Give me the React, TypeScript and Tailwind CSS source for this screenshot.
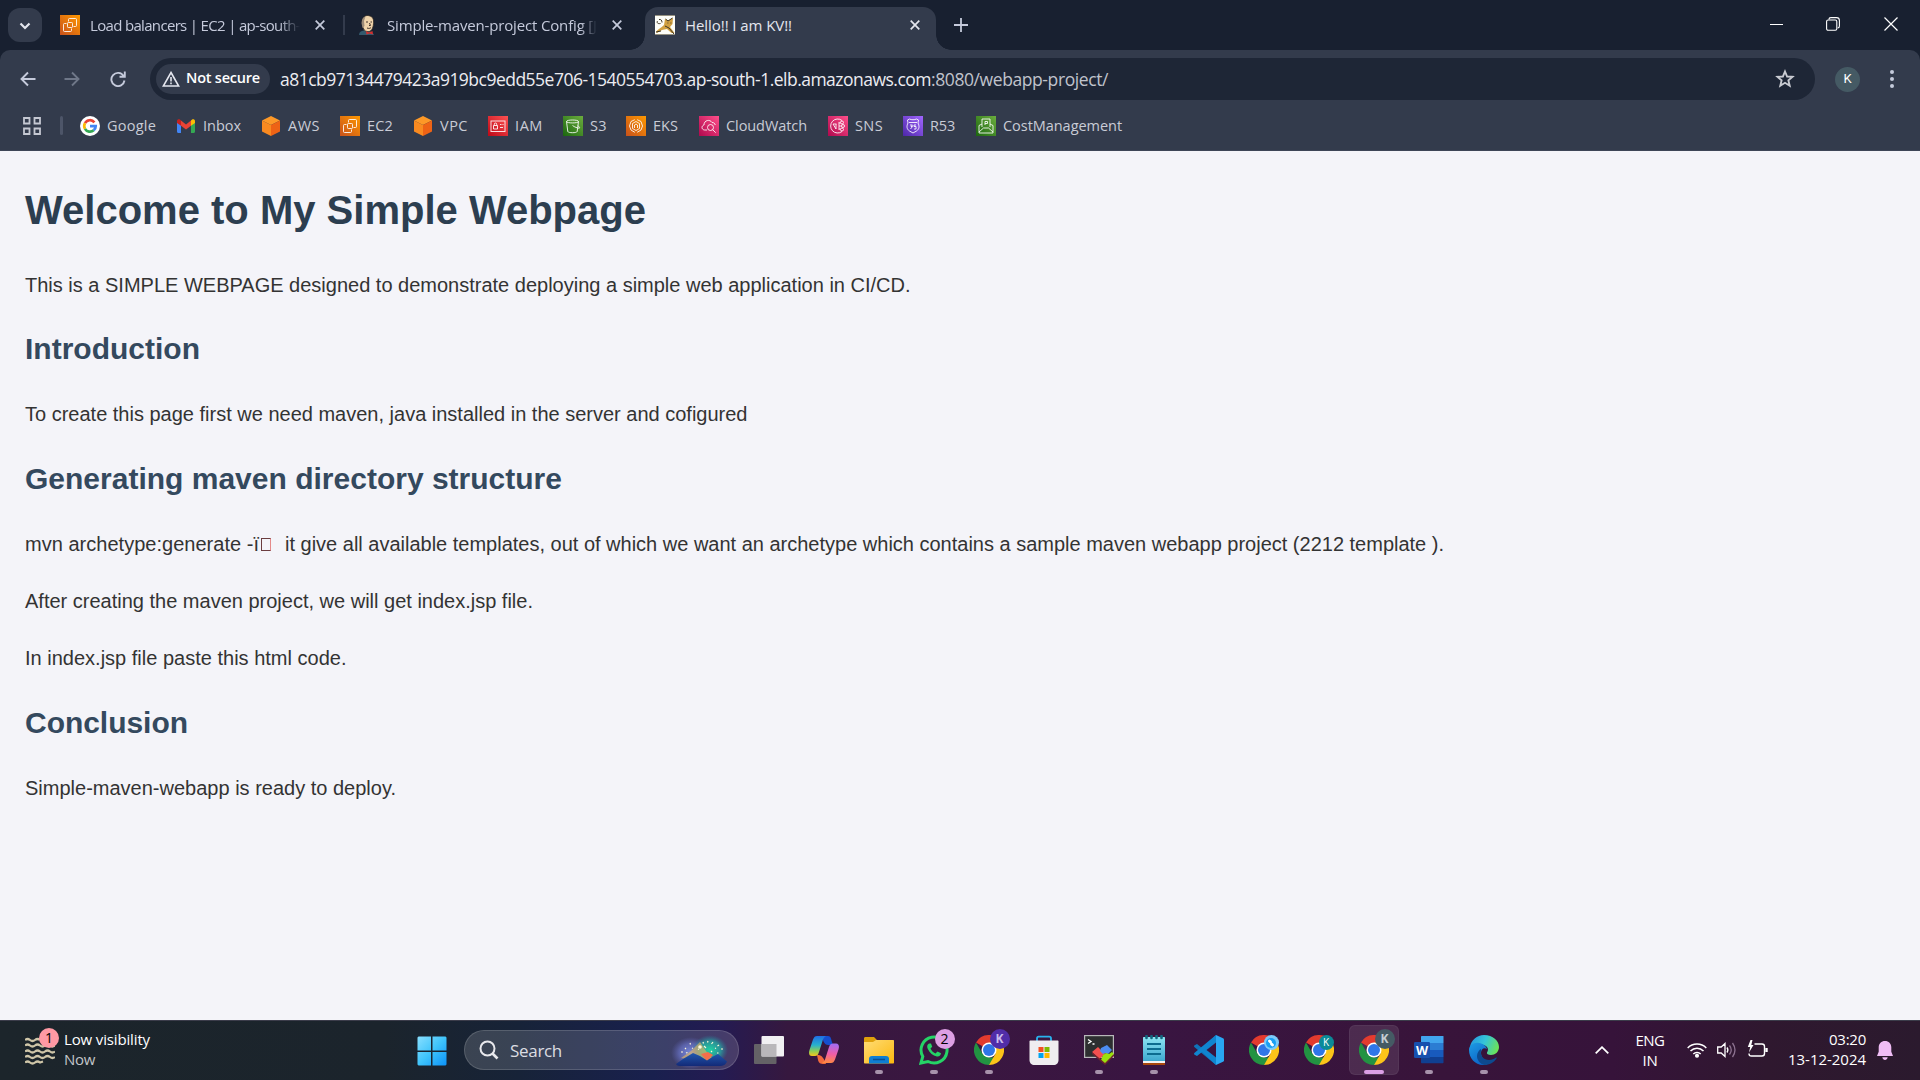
import React from "react";

type P = { className?: string };

const ui = "font-['Open_Sans','Noto_Sans',sans-serif]";

/* ---------- line drawings used inside the AWS service tiles ---------- */
const glyphs: Record<string, React.ReactNode> = {
  ec2: (
    <>
      <path d="M8.500 6.500V4.500q0-1 1-1h6q1 0 1 1v6q0 1-1 1h-2" />
      <rect x="7.500" y="7.500" width="5" height="5" rx=".8" />
      <path d="M6.500 8.500h-2q-1 0-1 1v6q0 1 1 1h6q1 0 1-1v-2" />
    </>
  ),
  iam: (
    <>
      <rect x="3" y="5" width="14" height="10.500" />
      <path d="M5.500 9.500h4v3.500h-4zM6.300 9.500V8.200a1.200 1.200 0 0 1 2.400 0v1.300M12 8.500h1.500M14.500 8.500h1M12 11.500h3" />
    </>
  ),
  s3: (
    <path d="M3.500 5.500c0-2 12-2 12 0l-1.300 10c-.4 1.600-9 1.600-9.400 0L3.500 5.500c0 1.900 12 1.900 12 0M9.500 9.500c2 1.500 5 2.700 6.800 2.700 1-.3-.5-2-1.600-2.600" />
  ),
  eks: (
    <>
      <path d="M8.800 3.700L5 5.500 3.500 10 5 14l3.800 2.300M11.200 3.700L15 5.500l1.500 4.500-1.500 4-3.800 2.300" />
      <path d="M10 5.500l3.500 2v5L10 14.500l-3.500-2v-5z" />
      <path d="M8.500 12V9q1.500-2 3 0v3" />
    </>
  ),
  cw: (
    <>
      <path d="M8 14H5.500C2 13.500 2.500 9.500 5 9c0-5 6-6 8-2.500 2 0 3 1 3.200 2.500" />
      <circle cx="11.500" cy="11.500" r="3" />
      <path d="M13.700 13.700l3 3" />
    </>
  ),
  sns: (
    <>
      <path d="M14 4.500A7 7 0 1 0 14 15.500M5 8h3.500M5 8l3 5V8" />
      <circle cx="14" cy="6.500" r="1.500" />
      <circle cx="15" cy="10" r="1.500" />
      <circle cx="14" cy="13.500" r="1.500" />
      <path d="M11 6v8M11 10h2.500M11 7h1.500M11 13h1.500" />
    </>
  ),
  r53: (
    <>
      <path d="M4.500 4l2-1c2 1 5 1 7 0l2 1-.5 3c1.500 3 1.500 6-1.500 8L10 17l-3.500-2c-3-2-3-5-1.500-8z" />
      <path d="M6 6.500h8M7 9h2.500L8 10.500h1.500L7.500 13M13 9h-2v1.500h2V13h-2" />
    </>
  ),
  cost: (
    <>
      <path d="M3 9.500V17h14V9.500L14 8M3 9.500L6 8M3 16l4.500-4h5l4.500 4" />
      <path d="M6 11V3h8v8M9 9V5.500h2.500V7.500H9" />
    </>
  ),
};

const Tile = ({ g, from, to }: { g: string; from: string; to: string }) => (
  <svg viewBox="0 0 20 20" className="size-5 shrink-0">
    <defs>
      <linearGradient id={"tile-" + g} x1="0" y1="1" x2="1" y2="0">
        <stop offset="0" stopColor={from} />
        <stop offset="1" stopColor={to} />
      </linearGradient>
    </defs>
    <rect width="20" height="20" fill={`url(#tile-${g})`} />
    <g fill="none" stroke="#fff" strokeOpacity=".85" strokeWidth="1">
      {glyphs[g]}
    </g>
  </svg>
);

const Cube = () => (
  <svg viewBox="0 0 20 20" className="size-5 shrink-0">
    <path d="M10 0l9 4.500-9 4.500-9-4.500z" fill="#fd9827" />
    <path d="M1 4.500L10 9v11l-9-4.500z" fill="#f98a20" />
    <path d="M19 4.500L10 9v11l9-4.500z" fill="#ee6315" />
  </svg>
);

const Google = () => (
  <svg viewBox="0 0 20 20" className="size-5 shrink-0">
    <circle cx="10" cy="10" r="10" fill="#fff" />
    <g fill="none" strokeWidth="2.700">
      <path d="M14.400 6.300A5.700 5.700 0 0 0 5 7.200" stroke="#ea4335" />
      <path d="M5 7.200a5.700 5.700 0 0 0 0 5.600" stroke="#fbbc05" />
      <path d="M5 12.800a5.700 5.700 0 0 0 8.700 1.500" stroke="#34a853" />
      <path d="M13.700 14.300A5.700 5.700 0 0 0 15.700 10.100H10" stroke="#4285f4" />
    </g>
  </svg>
);

const Gmail = () => (
  <svg viewBox="0 0 20 20" className="size-5 shrink-0">
    <path d="M1 6v9.500c0 .8.600 1.500 1.400 1.500H5V9z" fill="#4285f4" />
    <path d="M19 6v9.500c0 .8-.6 1.500-1.400 1.500H15V9z" fill="#34a853" />
    <path d="M5 4.600l5 3.800 5-3.800v5.200l-5 3.800-5-3.800z" fill="#ea4335" />
    <path d="M1 5.300C1 3.300 3.100 2.900 4.200 3.800L5 4.500v5.300L1 6.900z" fill="#c5221f" />
    <path d="M19 5.300c0-2-2.100-2.400-3.200-1.500l-.8.700v5.300l4-2.900z" fill="#fbbc04" />
  </svg>
);

const Butler = () => (
  <svg viewBox="0 0 20 20" className="size-5 shrink-0">
    <path d="M1 20c0-3 2-4 5-4.500s9 .5 10 4.500z" fill="#33596d" />
    <path d="M4 5C5.500 1 8.500 0 11 .7c4 .9 5 4 4.500 8-.3 5-2.500 8-5.500 8-3.500 0-5-3-5.500-6z" fill="#eed3aa" stroke="#292320" strokeWidth=".8" />
    <path d="M3.500 8c.5-4 1.500-6 4-6.500L6 6l.5 5-2 2z" fill="#9c8b78" />
    <path d="M8 7h2M12.500 7H14M11.500 8l1 2.500H11M9 13c2 .7 3 .5 4-.5" stroke="#40312b" strokeWidth="1" fill="none" />
    <path d="M8 16l3 1.500 3.500-1.500.5 3.500-3.500-1-3 1z" fill="#d3302f" />
  </svg>
);

const Tomcat = () => (
  <svg viewBox="0 0 20 20" className="size-5 shrink-0">
    <rect width="20" height="20" fill="#fdfdf8" />
    <path d="M1 17c2-3 5-4 8-7l1-6 3 1.500L18 3l-.5 6-2.500 3 4.500 6h-3L12 14l-5 1-5 3z" fill="#d1a041" />
    <path d="M5.500 8.500C3 9 1.500 8 2.500 6M4 4.500c2-.5 3 1 3 3M1 17l5-1M10.500 4l2.500 2 4.500-3M12.500 8h.8M15.500 8h.8M10 11l4 2 5 6" fill="none" stroke="#3d3524" strokeWidth="1" />
    <path d="M0 .4h20M0 19.600h20" stroke="#6b6550" strokeWidth=".8" />
  </svg>
);

const Close = ({ className = "" }: P) => (
  <svg viewBox="0 0 10 10" className={"size-[10px] shrink-0 " + className} stroke="currentColor" strokeWidth="1.700">
    <path d="M.7.7l8.600 8.600M9.300.7L.7 9.300" />
  </svg>
);

/* A run of text held to a fixed advance width. */
const Fit = ({ w, size, weight, children }: { w: number; size: number; weight?: number; children: React.ReactNode }) => {
  const ref = React.useRef<HTMLSpanElement>(null);
  const [ls, setLs] = React.useState(0);
  React.useLayoutEffect(() => {
    const el = ref.current;
    if (!el) return;
    const n = (el.textContent || "").length;
    el.style.letterSpacing = "0px";
    const next = (w - el.getBoundingClientRect().width) / n;
    el.style.letterSpacing = next + "px";
    setLs(next);
  }, [w]);
  return (
    <span ref={ref} className="inline-block align-top whitespace-nowrap" style={{ letterSpacing: ls, fontSize: size, fontWeight: weight }}>
      {children}
    </span>
  );
};

/* ---------- browser chrome ---------- */
const TabStrip = () => (
  <div className="flex h-[50px] bg-[#182030] text-[15px] text-[#c5cadb]">
    <div className="mt-2 ml-2 flex h-[34px] w-[34px] shrink-0 items-center justify-center rounded-xl bg-[#333b4c]">
      <svg viewBox="0 0 12 8" className="mt-px h-2 w-3" fill="none" stroke="#e4e6ee" strokeWidth="2.200">
        <path d="M1.500 1.500L6 6l4.500-4.500" />
      </svg>
    </div>
    <div className="mt-2 ml-[18px] flex h-[34px] w-[266px] items-center">
      <Tile g="ec2" from="#c8511b" to="#ff9900" />
      <div className="ml-[10px] w-[210px] whitespace-nowrap [mask-image:linear-gradient(to_right,#000_90%,transparent)]">
        <Fit w={210} size={15}>Load balancers | EC2 | ap-south-</Fit>
      </div>
      <Close className="ml-[15px]" />
    </div>
    <div className="mt-[15px] ml-[17px] h-5 w-0.5 bg-[#333b4c]" />
    <div className="mt-2 ml-[13px] flex h-[34px] w-[267px] items-center">
      <Butler />
      <div className="ml-[9px] w-[210px] whitespace-nowrap [mask-image:linear-gradient(to_right,#000_92%,transparent)]">
        <Fit w={210} size={15}>Simple-maven-project Config [J</Fit>
      </div>
      <Close className="ml-[15px]" />
    </div>
    <div className="relative mt-[7px] ml-[20px] flex h-[43px] w-[291px] items-center rounded-t-[13px] bg-[#333b4c] pb-[7px]">
      <div className="absolute bottom-0 -left-[15px] size-[15px] bg-[radial-gradient(circle_at_0_0,#182030_14.500px,#333b4c_15px)]" />
      <div className="absolute -right-[15px] bottom-0 size-[15px] bg-[radial-gradient(circle_at_100%_0,#182030_14.500px,#333b4c_15px)]" />
      <div className="ml-[10px]">
        <Tomcat />
      </div>
      <div className="ml-[10px] w-[225px] text-[#e4e6ee]">
        <Fit w={107} size={15}>Hello!! I am KV!!</Fit>
      </div>
      <Close className="text-[#e4e6ee]" />
    </div>
    <svg viewBox="0 0 14 14" className="mt-[18px] ml-[18px] size-[14px]" stroke="#c5cadb" strokeWidth="1.800">
      <path d="M7 0v14M0 7h14" />
    </svg>
    <div className="mt-[16px] mr-[22px] ml-auto flex h-4 items-center">
      <div className="h-px w-[13px] bg-white" />
      <svg viewBox="0 0 14 14" className="ml-[43px] size-[14px]" fill="none" stroke="#fff" strokeWidth="1.100">
        <rect x=".6" y="3" width="10.200" height="10.200" rx="1.500" />
        <path d="M3 2.500C3 1 4 .6 5 .6h5.500c1.800 0 2.900 1 2.900 2.900V9c0 1-.5 2-1.800 2" />
      </svg>
      <svg viewBox="0 0 14 14" className="ml-[44px] size-[14px]" stroke="#fff" strokeWidth="1.200">
        <path d="M.5.500l13 13M13.500.500l-13 13" />
      </svg>
    </div>
  </div>
);

const Toolbar = () => (
  <div className="flex h-[58px] items-center bg-[#333b4c]">
    <svg viewBox="0 0 16 16" className="ml-5 size-4" fill="none" stroke="#c5cadb" strokeWidth="1.900">
      <path d="M15.500 8H1.500M8 1.500L1.500 8 8 14.500" />
    </svg>
    <svg viewBox="0 0 16 16" className="ml-7 size-4" fill="none" stroke="#6f7788" strokeWidth="1.900">
      <path d="M.5 8h14M8 1.500L14.500 8 8 14.500" />
    </svg>
    <svg viewBox="0 0 16 16" className="ml-[30px] size-4" fill="none" stroke="#c5cadb" strokeWidth="1.900">
      <path d="M13.600 5A6.600 6.600 0 1 0 14.500 9.500M14.800.5v5.300H9.500" />
    </svg>
    <div className="ml-[24px] flex h-[42px] w-[1665px] items-center rounded-full bg-[#1e2636] pl-[6px]">
      <div className="flex h-[30px] w-[114px] items-center rounded-full bg-[#333b4c] pl-[6px] text-white">
        <svg viewBox="0 0 18 16" className="h-4 w-[18px]" fill="none" stroke="#e4e6ee" strokeWidth="1.600">
          <path d="M9 1.500L16.700 15H1.300zM9 6v4.500M9 11.500v1.800" />
        </svg>
        <span className="ml-1.5 leading-none">
          <Fit w={74} size={14.500} weight={600}>Not secure</Fit>
        </span>
      </div>
      <div className="ml-[10px] flex text-[#ececf1]">
        <Fit w={651} size={17.500}>a81cb97134479423a919bc9edd55e706-1540554703.ap-south-1.elb.amazonaws.com</Fit>
        <span className="text-[#c0c3cc]">
          <Fit w={177} size={17.500}>:8080/webapp-project/</Fit>
        </span>
      </div>
      <svg viewBox="0 0 20 20" className="mr-5 ml-auto size-5" fill="none" stroke="#c9cbd2" strokeWidth="1.900">
        <path d="M10 2.500l2.100 5 5.400.4-4.100 3.500 1.300 5.300-4.700-2.900-4.700 2.900 1.300-5.300L2.500 7.900l5.400-.4z" />
      </svg>
    </div>
    <div className="ml-5 flex size-[25px] items-center justify-center rounded-full bg-[#455a64] font-['Roboto',sans-serif] text-[13px] text-white">K</div>
    <div className="ml-[30px] flex w-1 flex-col gap-[3px]">
      <i className="size-1 rounded-full bg-[#c5cadb]" />
      <i className="size-1 rounded-full bg-[#c5cadb]" />
      <i className="size-1 rounded-full bg-[#c5cadb]" />
    </div>
  </div>
);

const orange = ["#c8511b", "#ff9900"];
const pink = ["#b0084d", "#ff4f8b"];
const bookmarks: { t: string; w: number; cell: number; icon: React.ReactNode }[] = [
  { t: "Google", w: 49, cell: 96, icon: <Google /> },
  { t: "Inbox", w: 38, cell: 85, icon: <Gmail /> },
  { t: "AWS", w: 32, cell: 79, icon: <Cube /> },
  { t: "EC2", w: 26, cell: 73, icon: <Tile g="ec2" from={orange[0]} to={orange[1]} /> },
  { t: "VPC", w: 28, cell: 75, icon: <Cube /> },
  { t: "IAM", w: 28, cell: 75, icon: <Tile g="iam" from="#bd0816" to="#ff5252" /> },
  { t: "S3", w: 17, cell: 63, icon: <Tile g="s3" from="#1b660f" to="#6cae3e" /> },
  { t: "EKS", w: 25, cell: 73, icon: <Tile g="eks" from={orange[0]} to={orange[1]} /> },
  { t: "CloudWatch", w: 81, cell: 129, icon: <Tile g="cw" from={pink[0]} to={pink[1]} /> },
  { t: "SNS", w: 28, cell: 75, icon: <Tile g="sns" from={pink[0]} to={pink[1]} /> },
  { t: "R53", w: 25, cell: 73, icon: <Tile g="r53" from="#4d27a8" to="#a166ff" /> },
  { t: "CostManagement", w: 119, cell: 170, icon: <Tile g="cost" from="#1b660f" to="#6cae3e" /> },
];

const Bookmarks = () => (
  <div className="flex h-[43px] border-b border-[#3d4557] bg-[#333b4c] text-[#c9ccd6]">
    <svg viewBox="0 0 18 18" className="mt-[9px] ml-[23px] size-[18px]" fill="none" stroke="#c5c8d2" strokeWidth="1.800">
      <path d="M1 1h5.500v5.500H1zM11.500 1H17v5.500h-5.500zM1 11.500h5.500V17H1zM11.500 11.500H17V17h-5.500z" />
    </svg>
    <div className="mt-2 ml-[19px] h-[19px] w-[3px] rounded bg-[#4d5568]" />
    <div className="ml-[17px] flex h-9 items-center">
      {bookmarks.map((b) => (
        <div key={b.t} className="flex items-center gap-[7px]" style={{ width: b.cell }}>
          {b.icon}
          <Fit w={b.w} size={14.500}>{b.t}</Fit>
        </div>
      ))}
    </div>
  </div>
);

/* ---------- web page ---------- */
const H2 = ({ w, children }: { w: number; children: React.ReactNode }) => (
  <h2 className="mb-[25px] h-12 leading-[48px] text-[#34495e]">
    <Fit w={w} size={30} weight={700}>{children}</Fit>
  </h2>
);
const Para = ({ w, children }: { w: number; children: React.ReactNode }) => (
  <p className="mb-[25px] h-8 leading-8 text-[#333]">
    <Fit w={w} size={20}>{children}</Fit>
  </p>
);

const Page = () => (
  <main className="h-[869px] bg-[#f4f4f9] px-[25px] pt-[27px] font-['Liberation_Sans',Arial,sans-serif]">
    <h1 className="mb-[27px] h-16 leading-[64px] text-[#2c3e50]">
      <Fit w={621} size={40} weight={700}>Welcome to My Simple Webpage</Fit>
    </h1>
    <Para w={885.5}>This is a SIMPLE WEBPAGE designed to demonstrate deploying a simple web application in CI/CD.</Para>
    <div className="-mt-px">
      <H2 w={175}>Introduction</H2>
      <Para w={722.5}>To create this page first we need maven, java installed in the server and cofigured</Para>
      <H2 w={537}>Generating maven directory structure</H2>
      <p className="mb-[25px] flex h-8 items-center leading-8 text-[#333]">
        <Fit w={234} size={20}>mvn archetype:generate -ï</Fit>
        <i className="mt-px ml-[2px] h-[13px] w-[10px] border border-[#6b3d40] border-r-[#e58a8a]" />
        <span className="ml-[14px]">
          <Fit w={1159} size={20}>it give all available templates, out of which we want an archetype which contains a sample maven webapp project (2212 template ).</Fit>
        </span>
      </p>
      <Para w={508}>After creating the maven project, we will get index.jsp file.</Para>
      <Para w={321.5}>In index.jsp file paste this html code.</Para>
      <H2 w={163}>Conclusion</H2>
      <Para w={371}>Simple-maven-webapp is ready to deploy.</Para>
    </div>
  </main>
);

/* ---------- taskbar icons ---------- */
const Windows = () => (
  <svg viewBox="0 0 30 30" className="size-[30px]">
    <defs>
      <linearGradient id="win" x1="0" y1="0" x2="30" y2="30" gradientUnits="userSpaceOnUse">
        <stop offset="0" stopColor="#8be0ff" />
        <stop offset=".5" stopColor="#3fc4fb" />
        <stop offset="1" stopColor="#0a90f8" />
      </linearGradient>
    </defs>
    <path d="M1.500.5H14v14H.5v-13zM15.500.5h13l1 1v13h-14zM.5 16H14v13.500H1.500l-1-1zM15.500 16h14v12.500l-1 1h-13z" fill="url(#win)" />
  </svg>
);

const TaskView = () => (
  <svg viewBox="0 0 30 30" className="size-[30px]">
    <rect y="9" width="22.500" height="20" rx="1" fill="#646266" />
    <rect x="7.500" y="1" width="22.500" height="20.500" rx="1" fill="#f1f0f2" />
    <path d="M7.500 9h15v12.500h-15z" fill="#b9b7ba" />
  </svg>
);

const Copilot = () => (
  <svg viewBox="0 0 30 30" className="size-[30px]">
    <defs>
      <linearGradient id="cpa" x1="0" y1="0" x2="0" y2="1">
        <stop offset="0" stopColor="#1f6fe5" />
        <stop offset=".45" stopColor="#27b1cf" />
        <stop offset=".75" stopColor="#8ccf57" />
        <stop offset="1" stopColor="#f6c61c" />
      </linearGradient>
      <linearGradient id="cpb" x1=".3" y1="0" x2=".2" y2="1">
        <stop offset="0" stopColor="#a66cf0" />
        <stop offset=".5" stopColor="#ef5da8" />
        <stop offset="1" stopColor="#ff8b3d" />
      </linearGradient>
    </defs>
    <path d="M13 1h6c3 0 3 3 4 6l1 3h-5c-3 0-5-3-6-9z" fill="#154fd0" />
    <path d="M8 1h9c-2 1-3 3-3.500 5L10 17c-1 3-2 4-4 4H3c-3 0-3.500-3-2.500-6L4 4.500C5 2 6 1 8 1z" fill="url(#cpa)" />
    <path d="M17 29c-5 0-7 0-8-4l-1-5c4 0 6 1 9 9z" fill="#f16a3d" />
    <path d="M22 28h-9c2-1 3-3 3.500-5L20 12c1-3 2-3.500 4-3.500h3c3 0 3.500 3 2.500 6L26 24.500c-1 2.500-2 3.500-4 3.500z" fill="url(#cpb)" />
  </svg>
);

const Explorer = () => (
  <svg viewBox="0 0 30 30" className="size-[30px]">
    <defs>
      <linearGradient id="fold" x1="0" y1="0" x2="1" y2="1">
        <stop offset="0" stopColor="#ffdc75" />
        <stop offset="1" stopColor="#fcb80f" />
      </linearGradient>
    </defs>
    <path d="M0 3.500C0 2.600.5 2 1.500 2H10l3 3h15v4H0z" fill="#dfa00b" />
    <path d="M0 7h9l3-2h17c.6 0 1 .4 1 1v21.500c0 .6-.4 1-1 1H1c-.6 0-1-.4-1-1z" fill="url(#fold)" />
    <path d="M5 28.500V24c0-2 1-3 3-3h14c2 0 3 1 3 3v4.500z" fill="#0f7ed2" />
    <path d="M9 24.500h12" stroke="#0a4f93" strokeWidth="1.500" />
  </svg>
);

const WhatsApp = () => (
  <svg viewBox="0 0 30 30" className="size-[30px]" fill="none">
    <path d="M2 28l1.800-6.500A13 13 0 1 1 9 26.500z" stroke="#25d366" strokeWidth="3" />
    <path d="M10 8.500c-2 1-2.300 3-1.200 5.500 2 4 5 6.500 9 7.500 2.500.5 4-1 4.200-3.200L18.500 16.500l-2 2c-2.500-1-4-2.700-5-5l1.700-1.800L12 8.500z" fill="#25d366" />
  </svg>
);

const Chrome = () => (
  <svg viewBox="0 0 30 30" className="size-[30px]">
    <path d="M15 15L2 7.500A15 15 0 0 1 28 7.500z" fill="#e33b2e" />
    <path d="M2 7.500L8.500 18.800 15 22.500h6.500L15 30A15 15 0 0 1 2 7.500z" fill="#229342" />
    <path d="M21.500 18.700L15 30a15 15 0 0 0 13-22.500H15z" fill="#fcc419" />
    <circle cx="15" cy="15" r="7.500" fill="#fff" />
    <circle cx="15" cy="15" r="6" fill="#2f76e8" />
  </svg>
);

const Store = () => (
  <svg viewBox="0 0 30 30" className="size-[30px]">
    <path d="M8 7V3.500C8 2.300 8.600 1.700 9.800 1.700h10.400c1.200 0 1.800.6 1.800 1.800V7" fill="none" stroke="#29b2ee" strokeWidth="1.800" />
    <path d="M.5 6.500c0-.8.300-1 1-1h27c.7 0 1 .2 1 1V25c0 3-2 5-5 5h-19c-3 0-5-2-5-5z" fill="#efedf0" />
    <path d="M9.500 12h5v5h-5z" fill="#f25022" />
    <path d="M15.500 12h5v5h-5z" fill="#7fba00" />
    <path d="M9.500 18h5v5h-5z" fill="#00a4ef" />
    <path d="M15.500 18h5v5h-5z" fill="#ffb900" />
  </svg>
);

const Terminal = () => (
  <svg viewBox="0 0 30 30" className="size-[30px]">
    <rect x=".6" y=".6" width="28.800" height="21.800" fill="#2d2f30" stroke="#b8b8ba" strokeWidth="1.200" />
    <path d="M4 4.500l3 2-3 2M8.500 9h2" stroke="#fff" strokeWidth="1.300" fill="none" />
    <path d="M8 17l6-5 3 3 2-1 3 3-4 5-3 2z" fill="#f2504f" />
    <path d="M17 13l6-3 5 5-4 4-3-1-2 1-3-3z" fill="#4c8df0" />
    <path d="M19 20l3-2 3 1 3-2 2 2-9 10-4-4z" fill="#9be00c" />
    <path d="M8 17v2l13 11 9-9v-2l-9 9z" fill="#6b2430" />
  </svg>
);

const Notepad = () => (
  <svg viewBox="0 0 30 30" className="size-[30px]">
    <defs>
      <linearGradient id="note" x1="0" y1="0" x2="0" y2="1">
        <stop offset="0" stopColor="#8ce4f2" />
        <stop offset="1" stopColor="#3ea9cf" />
      </linearGradient>
    </defs>
    <path d="M4 25h22v4.500c0 .5-.3.500-.5.500h-21c-.3 0-.5-.2-.5-.5z" fill="#a8480d" />
    <path d="M4 24h22v4H4z" fill="#f3f3f3" />
    <path d="M4 3c0-.6.400-1 1-1h20c.6 0 1 .4 1 1v23H4z" fill="url(#note)" />
    <path d="M8 9h14M8 14h14M8 19h14" stroke="#0c6c8f" strokeWidth="1.900" />
    <path d="M7.500 1v2M12.500 1v2M17.500 1v2M22.500 1v2" stroke="#12677f" strokeWidth="2.600" strokeLinecap="round" />
  </svg>
);

const VSCode = () => (
  <svg viewBox="0 0 30 30" className="size-[30px]">
    <path d="M22 0L8 13 3 9 .6 10.300c-.8.600-.8 1.400 0 2L22 30z" fill="#0f73b8" />
    <path d="M22 30L8 17l-5 4-2.400-1.300c-.8-.6-.8-1.400 0-2L22 0z" fill="#1085cf" />
    <path d="M22 7.500L12.500 15l9.500 7.500z" fill="#391540" />
    <path d="M22 0l7 3.200c.6.300 1 .8 1 1.500v20.600c0 .7-.4 1.200-1 1.500L22 30z" fill="#29a7f2" />
  </svg>
);

const Word = () => (
  <svg viewBox="0 0 30 30" className="size-[30px]">
    <path d="M8 1h21c.6 0 .5.400.5 1v6H7V2c0-.6.400-1 1-1z" fill="#41a5ee" />
    <path d="M7 8h22.500v7H7z" fill="#2b7cd3" />
    <path d="M7 15h22.500v7H7z" fill="#185abd" />
    <path d="M7 22h22.500v5.500c0 .6-.4.800-1 .8H8c-.6 0-1-.4-1-1z" fill="#103f91" />
    <rect y="7" width="16" height="16" rx="1.300" fill="#1650ae" />
    <text x="8" y="19.500" textAnchor="middle" fontSize="12.500" fontWeight="700" fill="#fff">W</text>
  </svg>
);

const Edge = () => (
  <svg viewBox="0 0 30 30" className="size-[30px]">
    <defs>
      <linearGradient id="edg" x1="0" y1=".2" x2="1" y2=".5">
        <stop offset="0" stopColor="#2596e0" />
        <stop offset=".5" stopColor="#35c5d8" />
        <stop offset="1" stopColor="#6be25a" />
      </linearGradient>
      <linearGradient id="edb" x1="0" y1="0" x2=".6" y2="1">
        <stop offset="0" stopColor="#1d9ce4" />
        <stop offset="1" stopColor="#0c62c6" />
      </linearGradient>
    </defs>
    <path d="M1 12C2 5 8 0 15 0c9 0 15 6 15 12 0 5-4 8-8 8-3 0-4.500-1-4-2.500 3-4-1-8-6-8-5 0-9 1-11 4.500z" fill="url(#edg)" />
    <path d="M0 15c0-5 5-8 10-7 4 .5 7 3 8 6-3-2-6 0-6 4 0 5 4 8 8 9.500-2 2-4 2.500-6 2.500C6 30 0 23 0 15z" fill="url(#edb)" />
    <path d="M12 16c-1 5 3 9 8 9 3 0 5-1 7-2.500.5-.3 1 0 .6.700C25 27.500 20.500 30 15.500 30 11 29 8 25 8 21c0-3 2-6 4-7z" fill="#0d4a8f" />
  </svg>
);

type App = { id: string; icon: React.ReactNode; badge?: React.ReactNode; run?: boolean; active?: boolean };
const badge = "absolute flex items-center justify-center rounded-full font-['Open_Sans',sans-serif]";
const apps: App[] = [
  { id: "view", icon: <TaskView /> },
  { id: "copilot", icon: <Copilot /> },
  { id: "files", icon: <Explorer />, run: true },
  { id: "wa", icon: <WhatsApp />, run: true, badge: <b className={badge + " -top-[6px] left-4 size-5 bg-[#dd9fe3] text-sm font-normal text-black"}>2</b> },
  { id: "ch1", icon: <Chrome />, run: true, badge: <b className={badge + " -top-[6px] left-4 size-5 bg-[#512da8] text-xs text-[#c9bbec]"}>K</b> },
  { id: "store", icon: <Store /> },
  { id: "term", icon: <Terminal />, run: true },
  { id: "note", icon: <Notepad />, run: true },
  { id: "code", icon: <VSCode /> },
  {
    id: "ch2",
    icon: <Chrome />,
    badge: (
      <b className={badge + " top-0 left-[15px] size-[15px] bg-[#7ccbfa]"}>
        <svg viewBox="0 0 10 10" className="size-[10px]">
          <circle cx="5" cy="5" r="5" fill="#1aa0f4" />
          <path d="M3.500 3l1 1M5.500 6l1 1" stroke="#fff" strokeWidth="2.800" strokeLinecap="round" />
        </svg>
      </b>
    ),
  },
  { id: "ch3", icon: <Chrome />, badge: <b className={badge + " top-0 left-[15px] size-[15px] bg-[#0b8a98] text-[10px] font-normal text-white"}>K</b> },
  { id: "ch4", icon: <Chrome />, active: true, badge: <b className={badge + " -top-[6px] left-4 size-5 bg-[#455a64] text-xs text-[#c5ced3]"}>K</b> },
  { id: "word", icon: <Word />, run: true },
  { id: "edge", icon: <Edge />, run: true },
];

const SearchBox = () => (
  <div className="mt-[9px] flex h-10 w-[275px] shrink-0 items-center rounded-full border border-white/15 bg-white/15 text-[#dcdde2]">
    <svg viewBox="0 0 20 20" className="ml-[14px] size-5" fill="none" stroke="#e8e8ec" strokeWidth="2">
      <circle cx="8.500" cy="8.500" r="7" />
      <path d="M13.500 13.500l5 5" strokeWidth="2.600" />
    </svg>
    <span className="mt-[2px] ml-[11px]">
      <Fit w={52} size={17}>Search</Fit>
    </span>
    <svg viewBox="0 0 58 34" className="mt-1 mr-[9px] ml-auto h-[34px] w-[58px]">
      <defs>
        <radialGradient id="sk1">
          <stop offset="0" stopColor="#1fd3a4" />
          <stop offset=".6" stopColor="#25a5a0" stopOpacity=".8" />
          <stop offset="1" stopColor="#2b7a9c" stopOpacity="0" />
        </radialGradient>
        <radialGradient id="sk2">
          <stop offset="0" stopColor="#7b8de0" />
          <stop offset=".6" stopColor="#626bb8" stopOpacity=".8" />
          <stop offset="1" stopColor="#5b5fa8" stopOpacity="0" />
        </radialGradient>
        <linearGradient id="mtn" x1="0" y1="0" x2="0" y2="1">
          <stop offset="0" stopColor="#2059ae" />
          <stop offset="1" stopColor="#132a78" />
        </linearGradient>
      </defs>
      <ellipse cx="20" cy="18" rx="20" ry="16" fill="url(#sk2)" />
      <ellipse cx="39" cy="15" rx="18" ry="15" fill="url(#sk1)" />
      <path d="M10 23l10-7 9-9 6 9 6 7-6 4z" fill="#e8b95c" opacity=".6" />
      <path d="M30 19l6 7 6-6-5-3z" fill="#f36f4b" />
      <path d="M5 29l7-5 10-6 7 3 7 4.500 6-4 5-2.500 9 7.500c-1 3-4 4.500-7 4.500H11c-3 0-5 0-6-2z" fill="url(#mtn)" />
      <path d="M14 13l1 1M19 8l.5 1.500M10 17h2M21 13l1 .5M32 7l.5 1.500M37 6l-.5 1.500M42 7l-1.500 2M48 10l-1.500 1M52 14h-2M46 18h1.500M40 16l1 1M33 11l2 2M27 14l1 .5M15 18l1.500-.5M45 13l-1 .5" stroke="#fff8d8" strokeWidth="1.200" />
      <circle cx="29" cy="12" r="1.800" fill="#fff9df" />
    </svg>
  </div>
);

const Taskbar = () => (
  <footer className="flex h-[60px] border-t border-[#3b3c4a] bg-[linear-gradient(90deg,#1c252b_0%,#1b242c_20%,#172338_27%,#19204e_34%,#241b52_37.500%,#36183f_41%,#3a1740_48%,#391541_60%,#38143a_75%,#36133a_84%,#2f182f_92%,#2b1a2e_100%)] text-white">
    <div className="relative mt-[16px] ml-[25px] h-[30px] w-[30px] shrink-0">
      <svg viewBox="0 0 30 28" className="h-7 w-[30px]" fill="none" stroke="#cfc6a8" strokeWidth="2.200">
        <path d="M0 3q2.500-2 5 0t5 0 5 0M0 8.500q2.500-2 5 0t5 0 5 0 5 0 5 0 5 0M0 14.500q2.500-2 5 0t5 0 5 0 5 0 5 0 5 0M0 20q2.500-2 5 0t5 0 5 0 5 0 5 0 5 0M0 25.500q2.500-2 5 0t5 0 5 0l3-1" />
      </svg>
      <b className="absolute -top-[9px] left-[14px] flex size-5 items-center justify-center rounded-full bg-[#ff99a4] text-sm font-normal text-black">1</b>
    </div>
    <div className="mt-[8px] ml-[9px] w-[90px] shrink-0 leading-5">
      <div>
        <Fit w={86} size={15}>Low visibility</Fit>
      </div>
      <div className="text-[#c3c5c9]">
        <Fit w={31} size={15}>Now</Fit>
      </div>
    </div>
    <div className="mt-[15px] ml-[263px] shrink-0">
      <Windows />
    </div>
    <div className="ml-[17px]">
      <SearchBox />
    </div>
    <div className="ml-[2px] flex">
      {apps.map((a) => (
        <div key={a.id} className="flex w-[55px] justify-center pt-1">
          <div
            className={
              a.active
                ? "relative flex h-[50px] w-[50px] flex-col items-center rounded-md border border-white/5 bg-white/10 pt-[9px]"
                : "relative flex h-[50px] w-[50px] flex-col items-center border border-transparent pt-[9px]"
            }
          >
            <div className="relative size-[30px]">
              {a.icon}
              {a.badge}
            </div>
            {a.active && <i className="mt-[5px] h-1 w-5 rounded-full bg-[#dc9fe6]" />}
            {a.run && <i className="mt-[5px] h-1 w-2 rounded-full bg-[#a792ab]" />}
          </div>
        </div>
      ))}
    </div>
    <div className="ml-auto flex">
      <svg viewBox="0 0 14 8" className="mt-[25px] h-2 w-[14px]" fill="none" stroke="#fff" strokeWidth="1.800">
        <path d="M.7 7.300L7 1.200l6.300 6.100" />
      </svg>
      <div className="mt-[9px] ml-[26px] w-[30px] text-center leading-5">
        <div>
          <Fit w={29} size={15}>ENG</Fit>
        </div>
        <div>
          <Fit w={15} size={15}>IN</Fit>
        </div>
      </div>
      <svg viewBox="0 0 20 16" className="mt-[21px] ml-[22px] h-4 w-5" fill="none" stroke="#fff" strokeWidth="1.500">
        <path d="M.7 6a13 13 0 0 1 18.600 0M3.500 9a9 9 0 0 1 13 0M6.300 12a5.200 5.200 0 0 1 7.400 0" />
        <circle cx="10" cy="13.700" r="1.300" fill="#fff" />
      </svg>
      <svg viewBox="0 0 20 18" className="mt-5 ml-[10px] h-[18px] w-5" fill="none" stroke="#fff" strokeWidth="1.300">
        <path d="M.7 6h3.500L8 2.500v13L4.200 12H.7zM10 6.500q1.800 2.500 0 5" />
        <path d="M12.500 4.500q3.500 4.500 0 9M15.500 2q5 7 0 14" stroke="#8b718e" />
      </svg>
      <svg viewBox="0 0 21 18" className="mt-[19px] ml-[10px] h-[18px] w-[21px]" fill="none" stroke="#fff" strokeWidth="1.400">
        <path d="M7.500 4H15q2.500 0 2.500 2.500v7Q17.500 16 15 16H4.500Q2 16 2 13.500" />
        <path d="M19.500 8v4" strokeWidth="2.400" />
        <path d="M3.500 0L.8 7h2.400L2 12.500 6.500 5H4.300L5.500 0z" fill="#fff" stroke="none" />
      </svg>
      <div className="mt-[8px] ml-[20px] w-[78px] text-right leading-5">
        <div>
          <Fit w={37} size={15}>03:20</Fit>
        </div>
        <div>
          <Fit w={78} size={15}>13-12-2024</Fit>
        </div>
      </div>
      <svg viewBox="0 0 16 20" className="mt-5 mr-[27px] ml-[11px] h-5 w-4" fill="#f0bdf5">
        <path d="M8 0c3.700 0 6.300 2.600 6.300 6.300v4.500L16 15H0l1.700-4.200V6.300C1.700 2.600 4.300 0 8 0zM5.300 16.300h5.400C10.300 18 9.300 19 8 19s-2.300-1-2.700-2.700z" />
      </svg>
    </div>
  </footer>
);

export default function App() {
  return (
    <div className={"h-[1080px] w-[1920px] overflow-hidden bg-[#f4f4f9] " + ui}>
      <div className="bg-[#182030]">
        <TabStrip />
        <div className="overflow-hidden rounded-t-[10px]">
          <Toolbar />
        </div>
      </div>
      <Bookmarks />
      <Page />
      <Taskbar />
    </div>
  );
}
